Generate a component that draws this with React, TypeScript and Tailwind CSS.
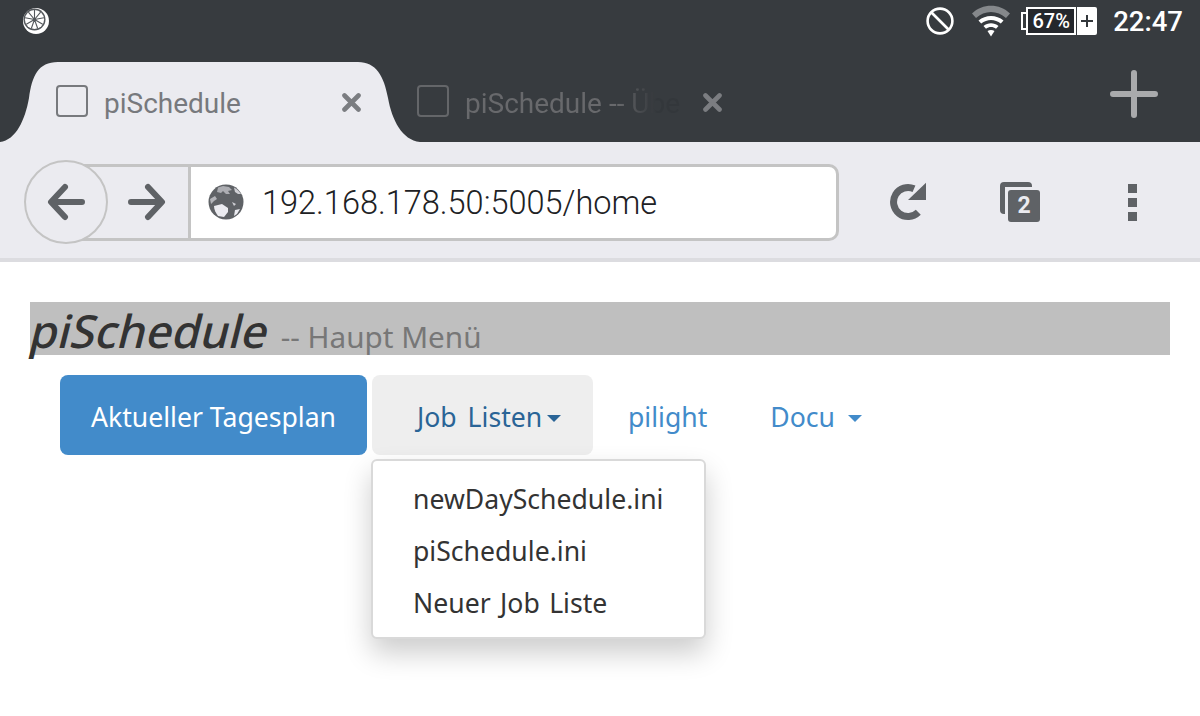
const chromeFont = "font-['Roboto',sans-serif]";
const pageFont = "font-['Noto_Sans',sans-serif]";

const menuItems = ["newDaySchedule.ini", "piSchedule.ini", "Neuer Job Liste"];

function LemonLogo() {
  return (
    <svg width="28" height="28" viewBox="0 0 28 28">
      <circle cx="14" cy="14" r="13" fill="#fff" />
      <circle cx="12.5" cy="12.5" r="11" fill="#54585c" />
      <circle cx="12.5" cy="12.5" r="9.6" fill="#fff" />
      <g stroke="#54585c" strokeWidth="1.1">
        <path d="M12.5 12.5L12.5 3M12.5 12.5L18.6 5.2M12.5 12.5L21.9 10.8M12.5 12.5L20.7 17.2M12.5 12.5L15.7 21.5M12.5 12.5L9.3 21.5M12.5 12.5L4.3 17.2M12.5 12.5L3.1 10.8M12.5 12.5L6.4 5.2" />
      </g>
    </svg>
  );
}

function BlockIcon() {
  return (
    <svg width="28" height="28" viewBox="0 0 28 28" fill="none" stroke="#fff" strokeWidth="2.6">
      <circle cx="14" cy="14" r="12.4" />
      <path d="M5.5 5.5L22.5 22.5" />
    </svg>
  );
}

function WifiIcon() {
  return (
    <svg width="38" height="32" viewBox="0 0 38 32">
      <path d="M0 8.5C10.5 -1.8 27.5 -1.8 38 8.5L34 13C25.5 5 12.5 5 4 13Z" fill="#85888b" />
      <path d="M6.5 15.5C13.5 9.5 24.5 9.5 31.5 15.5L28.8 18.5C23 13.8 15 13.8 9.2 18.5Z" fill="#fff" />
      <path d="M11.5 21C15.8 17.4 22.2 17.4 26.5 21L24 23.8C21 21.4 17 21.4 14 23.8Z" fill="#fff" />
      <path d="M15.5 26C17.5 24.5 20.5 24.5 22.5 26L19 31.5Z" fill="#fff" />
    </svg>
  );
}

function BatteryIcon() {
  return (
    <div className={`flex items-center ${chromeFont}`}>
      <div className="w-[5px] h-[18px] border-2 border-r-0 border-white" />
      <div className="w-[50px] h-[28px] border-2 border-white bg-[#24272c] text-white text-[20px] font-medium flex items-center justify-center leading-none">
        67%
      </div>
      <div className="ml-[1px] w-[20px] h-[28px] bg-white rounded-r-[2px] flex items-center justify-center">
        <svg width="12" height="12" viewBox="0 0 12 12" stroke="#33373b" strokeWidth="2">
          <path d="M0 6H12M6 0V12" />
        </svg>
      </div>
    </div>
  );
}

function CloseIcon() {
  return (
    <svg width="19" height="19" viewBox="0 0 19 19" stroke="#7b7d81" strokeWidth="4.6" strokeLinecap="round">
      <path d="M2.5 2.5L16.5 16.5M16.5 2.5L2.5 16.5" />
    </svg>
  );
}

function ActiveTab() {
  return (
    <div className="relative w-[420px] h-[80px] shrink-0">
      <svg className="absolute inset-0" width="420" height="80" viewBox="0 0 420 80">
        <path
          d="M0 80C16 78 25 58 29 36C32 14 38 0 58 0H358C376 0 384 14 388 36C392 58 402 78 420 80Z"
          fill="#ebebf0"
        />
      </svg>
      <div className="relative flex items-center h-full pl-[56px]">
        <div className="w-[32px] h-[32px] rounded-[4px] border-2 border-[#77797d] -mt-[2px]" />
        <span className="ml-[16px] w-[238px] text-[28px] text-[#77797d] mt-[3px]">piSchedule</span>
        <CloseIcon />
      </div>
    </div>
  );
}

function InactiveTab() {
  return (
    <div className="flex items-center h-[80px] -ml-[3px]">
      <div className="w-[32px] h-[32px] rounded-[4px] border-2 border-[#646669] -mt-[2px]" />
      <span className="ml-[16px] w-[218px] whitespace-nowrap text-[28px] mt-[3px] bg-linear-to-r from-[#68696c] from-[70%] to-[#33373b] to-[88%] bg-clip-text text-transparent">
        piSchedule -- Übe
      </span>
      <div className="ml-[20px]">
        <CloseIcon />
      </div>
    </div>
  );
}

function ArrowLeft() {
  return (
    <svg width="38" height="38" viewBox="0 0 38 38" fill="none" stroke="#5f6266" strokeWidth="6" strokeLinecap="round" strokeLinejoin="round">
      <path d="M35 19H5M18 4L4 19L18 34" />
    </svg>
  );
}

function ArrowRight() {
  return (
    <svg width="38" height="38" viewBox="0 0 38 38" fill="none" stroke="#5f6266" strokeWidth="6" strokeLinecap="round" strokeLinejoin="round">
      <path d="M3 19H33M20 4L34 19L20 34" />
    </svg>
  );
}

function GlobeIcon() {
  return (
    <svg width="36" height="36" viewBox="0 0 36 36">
      <circle cx="18" cy="18" r="17.5" fill="#5f6266" />
      <path d="M10 3.5L15 2L21 3L24 6L20 7L22 10L18 10L15 7L13 9L9 8Z" fill="#ebebf0" opacity="0.55" />
      <path d="M26 3.5C29 5 31 7 33 10L30 10L27 8Z" fill="#ebebf0" opacity="0.8" />
      <path d="M2 15L7 12L9 15L6 17L3 20Z" fill="#ebebf0" opacity="0.6" />
      <path d="M6 22L14 20L20 24L20 28L16 33L10 32C8 29 6 26 6 22Z" fill="#ebebf0" />
      <path d="M24 18L28 20L26 22Z" fill="#ebebf0" opacity="0.8" />
      <path d="M27 26L32 25L29 30L26 32Z" fill="#ebebf0" />
    </svg>
  );
}

function ReloadIcon() {
  return (
    <svg width="36" height="40" viewBox="0 0 36 40" fill="none">
      <path d="M28.3 31.3A14.5 14.5 0 1 1 24 7.8" stroke="#5f6266" strokeWidth="7" />
      <path d="M36 1.7V19H18Z" fill="#5f6266" />
    </svg>
  );
}

function TabCountIcon() {
  return (
    <div className={`relative w-[40px] h-[40px] ${chromeFont}`}>
      <div className="absolute left-0 top-0 w-[32px] h-[32px] rounded-[4px] border-l-[5px] border-t-[5px] border-[#5f6266]" />
      <div className="absolute left-[8px] top-[8px] w-[32px] h-[32px] rounded-[3px] bg-[#5f6266] text-[#ebebf0] text-[23px] font-bold flex items-center justify-center">
        2
      </div>
    </div>
  );
}

function MenuDots() {
  return (
    <div className="flex flex-col gap-[5px]">
      <div className="w-[9px] h-[9px] bg-[#5f6266]" />
      <div className="w-[9px] h-[9px] bg-[#5f6266]" />
      <div className="w-[9px] h-[9px] bg-[#5f6266]" />
    </div>
  );
}

function Caret() {
  return <span className="inline-block border-x-[7.5px] border-x-transparent border-t-[7.5px] border-t-current" />;
}

export default function App() {
  return (
    <div className="w-[1200px] h-[716px] overflow-hidden bg-white">
      <div className={`h-[142px] bg-[#373b3f] ${chromeFont}`}>
        <div className="h-[62px] flex items-start pt-[7px] pl-[22px] pr-[17px]">
          <LemonLogo />
          <div className="ml-auto flex items-center gap-[18px] h-[28px]">
            <BlockIcon />
            <WifiIcon />
          </div>
          <div className="ml-[11px]">
            <BatteryIcon />
          </div>
          <span className="ml-[16px] text-white text-[27.5px] font-medium leading-[30px]">22:47</span>
        </div>
        <div className="h-[80px] flex items-center">
          <ActiveTab />
          <InactiveTab />
          <svg className="ml-auto mr-[42px] -mt-[16px]" width="48" height="48" viewBox="0 0 48 48" stroke="#a9aaac" strokeWidth="6" strokeLinecap="round">
            <path d="M3 24H45M24 3V45" />
          </svg>
        </div>
      </div>

      <div className={`h-[120px] bg-[#ebebf0] border-b-4 border-[#dcdce0] flex items-center pt-[4px] pl-[24px] ${chromeFont}`}>
        <div className="relative z-10 w-[84px] h-[84px] rounded-full border-2 border-[#c4c4c4] bg-[#ebebf0] flex items-center justify-center">
          <ArrowLeft />
        </div>
        <div className="-ml-[28px] w-[111px] h-[77px] border-y-[3px] border-r-[3px] border-[#c4c4c4] flex items-center pl-[48px]">
          <ArrowRight />
        </div>
        <div className="w-[648px] h-[77px] border-y-[3px] border-r-[3px] border-[#c4c4c4] rounded-r-[10px] bg-white flex items-center pl-[17px]">
          <GlobeIcon />
          <span className="ml-[18px] mt-[3px] text-[32.5px] font-light text-[#202124]">192.168.178.50:5005/home</span>
        </div>
        <div className="ml-[51px] -mt-[2px]">
          <ReloadIcon />
        </div>
        <div className="ml-[74px]">
          <TabCountIcon />
        </div>
        <div className="ml-[88px]">
          <MenuDots />
        </div>
      </div>

      <div className={`pt-[40px] px-[30px] ${pageFont}`}>
        <div className="h-[53px] bg-[#bfbfbf] flex items-baseline whitespace-nowrap leading-[56px]">
          <span className="inline-block origin-bottom-left -skew-x-[14deg] -ml-[5px] text-[45.5px] font-medium text-[#333]">piSchedule</span>
          <span className="ml-[18px] text-[29.7px] text-[#777]">-- Haupt Menü</span>
        </div>

        <div className="mt-[20px] ml-[30px] flex text-[26.6px] leading-[84px]">
          <a className="w-[307px] h-[80px] rounded-[8px] bg-[#428bca] text-white text-center">Aktueller Tagesplan</a>
          <div className="relative ml-[5px]">
            <a className="w-[221px] h-[80px] pt-[4px] rounded-[8px] bg-[#eeeeee] text-[#2a6496] flex items-center pl-[45px] [word-spacing:4px]">
              Job Listen
              <span className="ml-[5px] mt-[3px] flex">
                <Caret />
              </span>
            </a>
            <ul className="absolute -left-[1px] top-[84px] w-[335px] h-[180px] py-[12px] bg-white border-2 border-[#d9d9d9] rounded-[6px] shadow-[0_14px_28px_rgba(0,0,0,0.2)] text-[#333] leading-[52px] [word-spacing:2.5px]">
              {menuItems.map((item) => (
                <li key={item} className="pl-[40px]">
                  {item}
                </li>
              ))}
            </ul>
          </div>
          <a className="ml-[35px] text-[#428bca]">pilight</a>
          <a className="ml-[63px] h-[80px] pt-[4px] flex items-center text-[#428bca]">
            Docu
            <span className="ml-[13px] mt-[3px] flex">
              <Caret />
            </span>
          </a>
        </div>
      </div>
    </div>
  );
}
